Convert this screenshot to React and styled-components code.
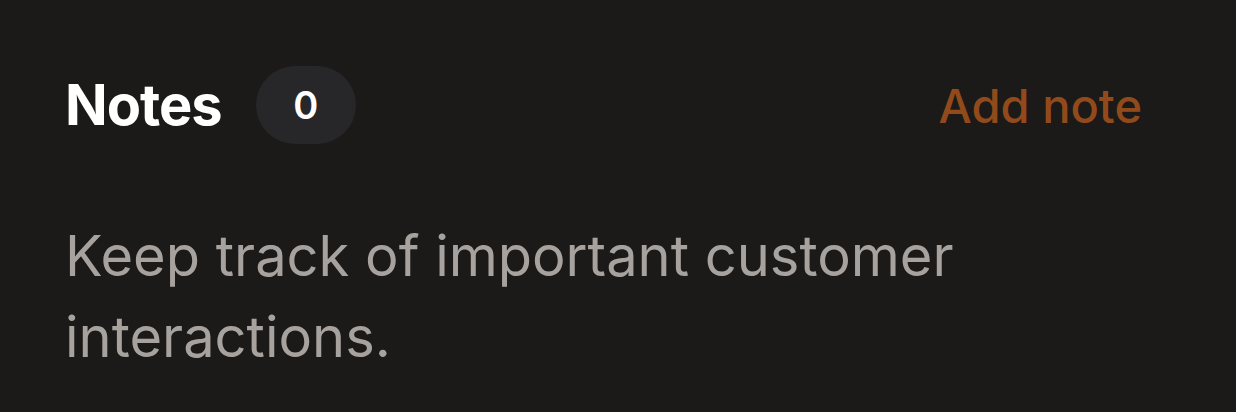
import React from 'react';
import styled, { createGlobalStyle } from 'styled-components';

const GlobalStyle = createGlobalStyle`
  html, body {
    margin: 0;
    padding: 0;
    background: #1b1a19;
  }
  body {
    font-family: Inter, "Noto Sans", sans-serif;
    -webkit-font-smoothing: antialiased;
  }
`;

const Panel = styled.section`
  width: 1236px;
  height: 412px;
  box-sizing: border-box;
  padding: 64px 94px 0 65px;
  background: #1b1a19;
`;

const Header = styled.div`
  display: flex;
  align-items: center;
  justify-content: space-between;
  height: 82px;
`;

const TitleGroup = styled.div`
  display: flex;
  align-items: center;
  gap: 34px;
`;

const Title = styled.h2`
  margin: 0;
  font-size: 56px;
  font-weight: 700;
  letter-spacing: -1px;
  color: #ffffff;
`;

const CountBadge = styled.span`
  display: inline-flex;
  align-items: center;
  justify-content: center;
  width: 100px;
  height: 78px;
  border-radius: 999px;
  background: #27272a;
  color: #ffffff;
  font-size: 38px;
  font-weight: 600;
`;

const AddButton = styled.button`
  border: none;
  background: none;
  padding: 0;
  font-family: inherit;
  font-size: 47px;
  font-weight: 500;
  color: #924a1b;
  cursor: pointer;
`;

const Description = styled.p`
  margin: 70px 0 0;
  font-size: 56px;
  line-height: 81px;
  color: #a8a29e;
`;

export default function App() {
  return (
    <>
      <GlobalStyle />
      <Panel>
        <Header>
          <TitleGroup>
            <Title>Notes</Title>
            <CountBadge>0</CountBadge>
          </TitleGroup>
          <AddButton>Add note</AddButton>
        </Header>
        <Description>Keep track of important customer interactions.</Description>
      </Panel>
    </>
  );
}
